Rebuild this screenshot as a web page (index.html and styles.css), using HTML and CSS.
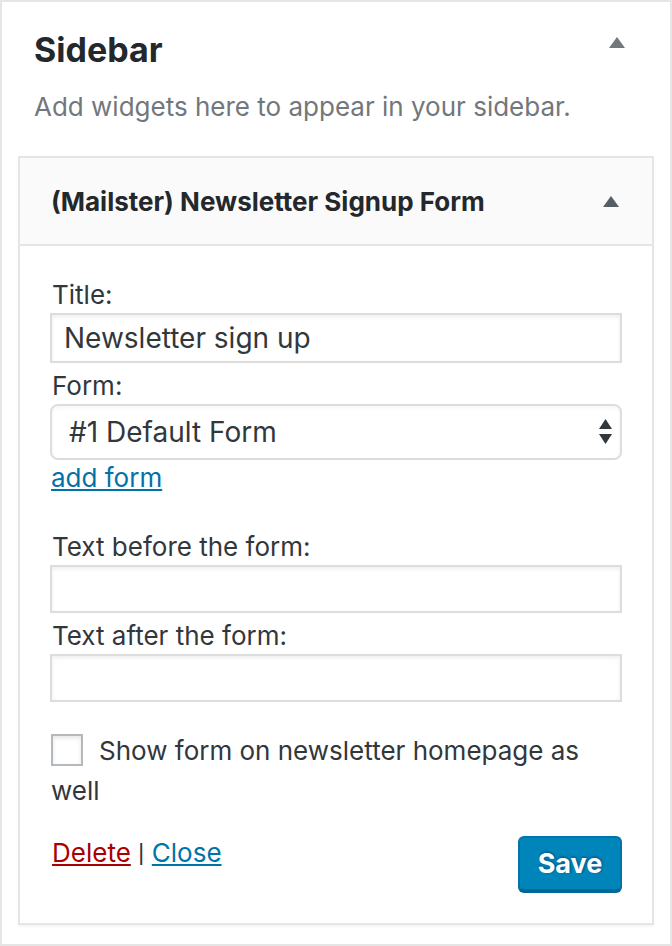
FILE: index.html
```html
<!DOCTYPE html>
<html lang="en">
<head>
<meta charset="utf-8">
<title>Sidebar widgets</title>
<link rel="stylesheet" href="styles.css">
</head>
<body>
<div class="panel">
  <div class="panel-head">
    <h2 class="panel-title">Sidebar</h2>
    <svg class="toggle-arrow" width="16" height="11" viewBox="0 0 16 11" aria-hidden="true"><polygon points="8,0 16,11 0,11" fill="#72777c"/></svg>
  </div>
  <p class="panel-desc">Add widgets here to appear in your sidebar.</p>

  <div class="widget">
    <div class="widget-head">
      <h3 class="widget-title">(Mailster) Newsletter Signup Form</h3>
      <svg class="widget-arrow" width="16" height="11" viewBox="0 0 16 11" aria-hidden="true"><polygon points="8,0 16,11 0,11" fill="#555d66"/></svg>
    </div>
    <div class="widget-body">
      <label class="field-label" for="w-title">Title:</label>
      <input class="field-input field-input--filled" id="w-title" type="text" value="Newsletter sign up">

      <label class="field-label field-label--tight" for="w-form">Form:</label>
      <div class="select-wrap">
        <select class="field-select" id="w-form">
          <option>#1 Default Form</option>
        </select>
        <svg class="select-arrows" width="13" height="25" viewBox="0 0 13 25" aria-hidden="true">
          <polygon points="6.5,0 13,10 0,10" fill="#32373c"/>
          <polygon points="0,15 13,15 6.5,25" fill="#32373c"/>
        </svg>
      </div>
      <a class="link link-blue add-form" href="#">add form</a>

      <label class="field-label field-label--spaced" for="w-before">Text before the form:</label>
      <input class="field-input" id="w-before" type="text">

      <label class="field-label field-label--tight" for="w-after">Text after the form:</label>
      <input class="field-input" id="w-after" type="text">

      <p class="check-row"><input class="check" type="checkbox" id="w-home"><label for="w-home">Show form on newsletter homepage as well</label></p>

      <div class="widget-actions">
        <div class="action-links"><a class="link link-red" href="#">Delete</a> <span class="sep">|</span> <a class="link link-blue" href="#">Close</a></div>
        <button class="btn-save" type="button">Save</button>
      </div>
    </div>
  </div>
</div>
</body>
</html>
```

FILE: styles.css
```css
* { box-sizing: border-box; }

html, body {
  margin: 0;
  padding: 0;
  background: #fff;
}

body {
  font-family: Inter, Roboto, "Liberation Sans", Arial, sans-serif;
  color: #32373c;
}

.panel {
  width: 672px;
  height: 946px;
  border: 2px solid #e5e5e5;
  background: #fff;
  padding: 0 16px;
}

.panel-head {
  display: flex;
  justify-content: space-between;
  align-items: flex-start;
  padding: 26px 29px 0 16px;
}

.panel-title {
  margin: 0;
  font-size: 34px;
  line-height: 44px;
  font-weight: 700;
  color: #23282d;
}

.toggle-arrow {
  display: block;
  margin-top: 9px;
}

.panel-desc {
  margin: 17px 0 0;
  padding-left: 16px;
  font-size: 26px;
  line-height: 36px;
  color: #72777c;
}

.widget {
  margin-top: 31px;
  border: 2px solid #e5e5e5;
  background: #fff;
  box-shadow: 0 2px 2px rgba(0, 0, 0, 0.04);
}

.widget-head {
  display: flex;
  justify-content: space-between;
  align-items: flex-start;
  background: #fafafa;
  border-bottom: 2px solid #e5e5e5;
  padding: 26px 33px 24px 31px;
}

.widget-title {
  margin: 0;
  font-size: 26px;
  line-height: 36px;
  font-weight: 700;
  color: #23282d;
}

.widget-arrow {
  display: block;
  margin-top: 12px;
}

.widget-body {
  padding: 31px 30px 32px;
}

.field-label {
  display: block;
  font-size: 26px;
  line-height: 36px;
  color: #32373c;
  padding-left: 2px;
}

.field-label--tight { margin-top: 5px; }
.field-label--spaced { margin-top: 33px; }

.field-input {
  display: block;
  width: 100%;
  height: 48px;
  margin: 0;
  border: 2px solid #ddd;
  border-radius: 0;
  box-shadow: inset 0 2px 4px rgba(0, 0, 0, 0.07);
  background: #fff;
  padding: 0 12px;
  font-family: inherit;
  font-size: 28px;
  color: #32373c;
  outline: none;
}

.field-input--filled { height: 50px; }

.select-wrap {
  position: relative;
}

.field-select {
  display: block;
  width: 100%;
  height: 56px;
  margin: 0;
  border: 2px solid #ddd;
  border-radius: 8px;
  background: #fff;
  box-shadow: inset 0 2px 4px rgba(0, 0, 0, 0.04);
  padding: 0 17px;
  font-family: inherit;
  font-size: 28px;
  color: #32373c;
  -webkit-appearance: none;
  appearance: none;
  outline: none;
}

.select-arrows {
  position: absolute;
  right: 10px;
  top: 15px;
  pointer-events: none;
}

.link {
  font-size: 26px;
  line-height: 36px;
  text-decoration: underline;
}

.link-blue { color: #0073aa; }
.link-red { color: #a00; }

.add-form {
  display: inline-block;
  padding-left: 1px;
}

.check-row {
  margin: 29px 0 0;
  font-size: 26px;
  line-height: 40px;
  color: #32373c;
  padding-left: 1px;
}

.check {
  -webkit-appearance: none;
  appearance: none;
  display: inline-block;
  vertical-align: top;
  width: 32px;
  height: 32px;
  margin: 3px 16px 0 0;
  border: 2px solid #b4b9be;
  border-radius: 0;
  background: #fff;
  box-shadow: inset 0 2px 4px rgba(0, 0, 0, 0.1);
}

.widget-actions {
  display: flex;
  justify-content: space-between;
  align-items: flex-start;
  margin-top: 24px;
}

.action-links {
  font-size: 26px;
  line-height: 36px;
  color: #32373c;
  padding-left: 2px;
}

.sep {
  font-family: Roboto, "Liberation Sans", sans-serif;
}

.btn-save {
  width: 104px;
  height: 55px;
  margin-top: 1px;
  border: 2px solid #0073aa;
  border-bottom-color: #006799;
  border-radius: 6px;
  background: #0085ba;
  box-shadow: 0 2px 0 #006799;
  color: #fff;
  font-family: inherit;
  font-size: 27px;
  font-weight: 700;
  text-shadow: 0 -2px 2px #006799, 2px 0 2px #006799;
  padding: 0;
}
```
